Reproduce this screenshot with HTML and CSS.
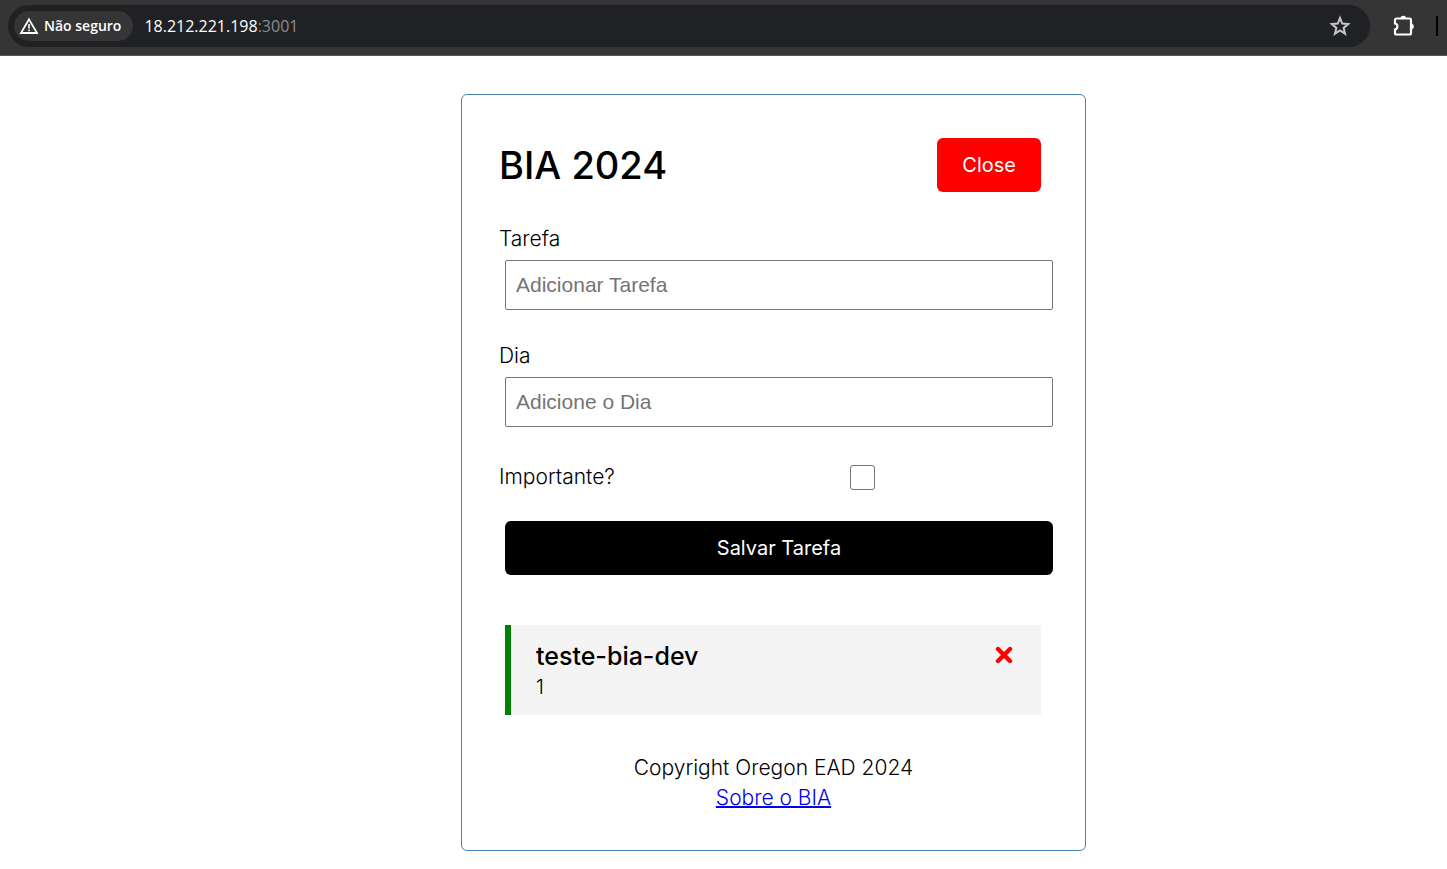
FILE: index.html
```html
<!DOCTYPE html>
<html lang="pt-BR">
<head>
<meta charset="utf-8">
<title>BIA 2024</title>
<link rel="stylesheet" href="styles.css">
</head>
<body>
<div class="browser-bar">
  <div class="address">
    <button class="security" type="button">
      <svg width="20" height="18" viewBox="0 0 20 18" fill="none" stroke="currentColor"><path d="M10 2.4 18 16H2z" stroke-width="1.8"/><path d="M10 7v4.6M10 12.6v1.6" stroke-width="1.6"/></svg>
      <span>Não seguro</span>
    </button>
    <span class="url">18.212.221.198<span class="port">:3001</span></span>
    <button class="icon-button star" type="button" aria-label="Favoritar">
      <svg width="22" height="22" viewBox="0 0 22 22" fill="none" stroke="currentColor" stroke-width="2"><path d="m11 3 2.200 5.500 6 .5-4.600 3.900 1.500 5.800-5.100-3.200-5.100 3.200 1.500-5.800L2.800 9l6-.5z"/></svg>
    </button>
  </div>
  <button class="icon-button extensions" type="button" aria-label="Extensões">
    <svg width="24" height="24" viewBox="0 0 24 24"><path d="M4.500 4.500h13a1.500 1.500 0 0 1 1.500 1.500v13a1.500 1.500 0 0 1-1.500 1.500h-13A1.500 1.500 0 0 1 3 19v-3.500c3.200-.5 3.200-5.500 0-6V6a1.500 1.500 0 0 1 1.500-1.500z" fill="none" stroke="currentColor" stroke-width="2.200"/><path d="M8.500 4.500a2.800 2.800 0 0 1 5.600 0zM19 9.700a2.800 2.800 0 0 1 0 5.600z" fill="currentColor"/></svg>
  </button>
  <span class="divider"></span>
</div>
<main class="page">
  <div class="card">
    <header class="header">
      <h1 class="title">BIA 2024</h1>
      <button class="btn btn-close" type="button">Close</button>
    </header>
    <form class="form">
      <div class="field">
        <label for="task">Tarefa</label>
        <input id="task" class="text-input" type="text" placeholder="Adicionar Tarefa">
      </div>
      <div class="field">
        <label for="day">Dia</label>
        <input id="day" class="text-input" type="text" placeholder="Adicione o Dia">
      </div>
      <div class="check-field">
        <label for="important">Importante?</label>
        <input id="important" class="checkbox" type="checkbox">
      </div>
      <button class="btn btn-save" type="submit">Salvar Tarefa</button>
    </form>
    <article class="task">
      <div>
        <h2 class="task-title">teste-bia-dev</h2>
        <p class="task-day">1</p>
      </div>
      <button class="task-delete" type="button" aria-label="Excluir">
        <svg width="18" height="18" viewBox="0 0 18 18"><path d="M3 3l12 12M15 3 3 15" stroke="currentColor" stroke-width="4.400" stroke-linecap="round"/></svg>
      </button>
    </article>
    <footer class="footer">
      <p>Copyright Oregon EAD 2024</p>
      <a href="#sobre">Sobre o BIA</a>
    </footer>
  </div>
</main>
</body>
</html>
```
FILE: styles.css
```css
* { box-sizing: border-box; margin: 0; padding: 0; }
body {
  background: #fff;
  color: #000;
  font: 300 21px/30px Inter, "Liberation Sans", sans-serif;
}
button { border: 0; cursor: pointer; }
svg { display: block; }

.browser-bar {
  display: flex;
  align-items: center;
  height: 56px;
  padding: 0 9px 4px 8px;
  background: #353535;
  border-bottom: 1px solid #5a5a5a;
  font-family: "Open Sans", "Noto Sans", sans-serif;
}
.address {
  display: flex;
  flex: 1;
  align-items: center;
  height: 42px;
  padding: 0 19px 0 6px;
  border-radius: 21px;
  background: #202124;
}
.security {
  display: flex;
  align-items: center;
  gap: 5px;
  height: 30px;
  padding: 0 12px 0 5px;
  border-radius: 15px;
  background: #353535;
  color: #fff;
  font: 600 14px/20px "Open Sans", "Noto Sans", sans-serif;
}
.url { margin-left: 11px; color: #fff; font-size: 16px; font-weight: 400; }
.port { color: #8b8d90; }
.icon-button { background: none; }
.star { margin-left: auto; color: #c7c7c7; }
.extensions { margin-left: 22px; color: #fff; }
.divider { width: 2px; height: 20px; margin-left: 20px; background: #000; }

.page { padding: 38px 0 18px 100px; }
.card {
  max-width: 625px;
  margin: 0 auto;
  padding: 37px;
  border: 1px solid steelblue;
  border-radius: 6px;
}
.header {
  display: flex;
  align-items: center;
  justify-content: space-between;
  padding: 6px 7px 6px 0;
  margin-bottom: 26px;
}
.title { font-size: 38px; line-height: 50px; font-weight: 500; }
.btn {
  height: 54px;
  padding: 0 25px;
  border-radius: 6px;
  color: #fff;
  font: 400 20px/28px Inter, "Liberation Sans", sans-serif;
}
.btn-close { background: red; }
.btn-save { display: block; width: 100%; background: #000; }

.form { margin-right: -5px; padding-left: 6px; }
.form label { display: block; margin-left: -6px; }
.field { margin-bottom: 31px; }
.text-input {
  display: block;
  width: 100%;
  height: 50px;
  margin-top: 6px;
  padding: 0 10px;
  border: 1px solid #767676;
  border-radius: 2px;
  font: 400 21px/24px "Liberation Sans", Arial, sans-serif;
}
.text-input::placeholder { color: #757575; }
.check-field { display: flex; align-items: center; padding-top: 4px; margin-bottom: 29px; }
.check-field label { flex: 1; }
.checkbox {
  appearance: none;
  width: 25px;
  height: 25px;
  margin-right: 178px;
  border: 1px solid #767676;
  border-radius: 3px;
  background: #fff;
}
.checkbox:checked { background: #0075ff; }

.task {
  display: flex;
  align-items: flex-start;
  justify-content: space-between;
  min-height: 90px;
  margin: 50px 7px 38px 6px;
  padding: 15px 28px 12px 25px;
  border-left: 6px solid green;
  background: #f4f4f4;
}
.task-title { font-size: 25px; line-height: 32px; font-weight: 500; }
.task-day { font-size: 20px; }
.task-delete { margin-top: 6px; background: none; color: red; }
.footer { text-align: center; }
.footer a { color: #0000ee; text-decoration-thickness: 2px; }
```
